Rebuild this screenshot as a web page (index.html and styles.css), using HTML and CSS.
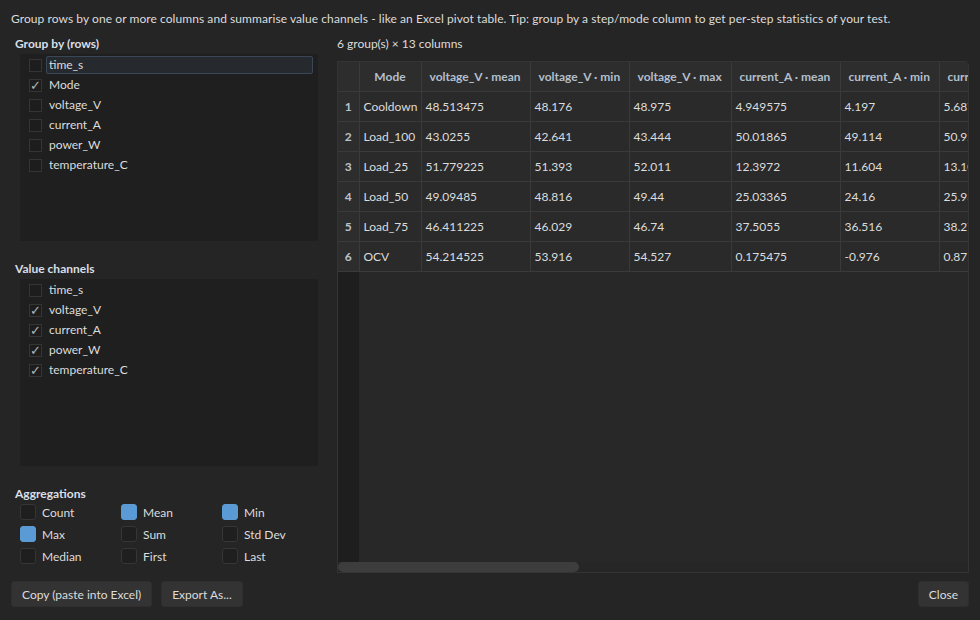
FILE: index.html
```html
<!DOCTYPE html>
<html lang="en">
<head>
  <meta charset="UTF-8">
  <title>Pivot table</title>
  <link rel="stylesheet" href="styles.css">
</head>
<body>
  <div class="dialog">
    <div class="intro">Group rows by one or more columns and summarise value channels - like an Excel pivot table. Tip: group by a step/mode column to get per-step statistics of your test.</div>

    <div class="main">
      <!-- left: options -->
      <div class="options">
        <div class="section-title">Group by (rows)</div>
        <div class="list">
          <div class="item current"><span class="check"></span><span class="label">time_s</span></div>
          <div class="item"><span class="check on">✓</span><span class="label">Mode</span></div>
          <div class="item"><span class="check"></span><span class="label">voltage_V</span></div>
          <div class="item"><span class="check"></span><span class="label">current_A</span></div>
          <div class="item"><span class="check"></span><span class="label">power_W</span></div>
          <div class="item"><span class="check"></span><span class="label">temperature_C</span></div>
        </div>

        <div class="section-title spaced">Value channels</div>
        <div class="list">
          <div class="item"><span class="check"></span><span class="label">time_s</span></div>
          <div class="item"><span class="check on">✓</span><span class="label">voltage_V</span></div>
          <div class="item"><span class="check on">✓</span><span class="label">current_A</span></div>
          <div class="item"><span class="check on">✓</span><span class="label">power_W</span></div>
          <div class="item"><span class="check on">✓</span><span class="label">temperature_C</span></div>
        </div>

        <div class="section-title spaced">Aggregations</div>
        <div class="aggs">
          <div class="agg"><span class="box"></span>Count</div>
          <div class="agg"><span class="box on"></span>Mean</div>
          <div class="agg"><span class="box on"></span>Min</div>
          <div class="agg"><span class="box on"></span>Max</div>
          <div class="agg"><span class="box"></span>Sum</div>
          <div class="agg"><span class="box"></span>Std Dev</div>
          <div class="agg"><span class="box"></span>Median</div>
          <div class="agg"><span class="box"></span>First</div>
          <div class="agg"><span class="box"></span>Last</div>
        </div>
      </div>

      <!-- right: result table -->
      <div class="result">
        <div class="caption">6 group(s) × 13 columns</div>
        <div class="frame">
          <div class="viewport">
            <table class="grid">
              <colgroup>
                <col class="c-idx"><col class="c-mode">
                <col class="c-mean"><col class="c-min"><col class="c-max">
                <col class="c-mean"><col class="c-min"><col class="c-max">
              </colgroup>
              <thead>
                <tr>
                  <th class="corner"></th>
                  <th class="center">Mode</th>
                  <th>voltage_V · mean</th><th>voltage_V · min</th><th>voltage_V · max</th>
                  <th>current_A · mean</th><th>current_A · min</th><th>current_A · max</th>
                </tr>
              </thead>
              <tbody>
                <tr><th class="row">1</th><td>Cooldown</td><td>48.513475</td><td>48.176</td><td>48.975</td><td>4.949575</td><td>4.197</td><td>5.687</td></tr>
                <tr><th class="row">2</th><td>Load_100</td><td>43.0255</td><td>42.641</td><td>43.444</td><td>50.01865</td><td>49.114</td><td>50.926</td></tr>
                <tr><th class="row">3</th><td>Load_25</td><td>51.779225</td><td>51.393</td><td>52.011</td><td>12.3972</td><td>11.604</td><td>13.105</td></tr>
                <tr><th class="row">4</th><td>Load_50</td><td>49.09485</td><td>48.816</td><td>49.44</td><td>25.03365</td><td>24.16</td><td>25.931</td></tr>
                <tr><th class="row">5</th><td>Load_75</td><td>46.411225</td><td>46.029</td><td>46.74</td><td>37.5055</td><td>36.516</td><td>38.274</td></tr>
                <tr><th class="row">6</th><td>OCV</td><td>54.214525</td><td>53.916</td><td>54.527</td><td>0.175475</td><td>-0.976</td><td>0.875</td></tr>
              </tbody>
            </table>
          </div>
          <div class="hscroll"><div class="handle"></div></div>
        </div>
      </div>
    </div>

    <div class="footer">
      <button class="btn">Copy (paste into Excel)</button>
      <button class="btn">Export As...</button>
      <span class="spacer"></span>
      <button class="btn">Close</button>
    </div>
  </div>
</body>
</html>
```

FILE: styles.css
```css
html, body {
  margin: 0;
  height: 100%;
}

body {
  background: #252525;
  color: #dcdcdc;
  font-family: Lato, "Segoe UI", "Open Sans", sans-serif;
  font-size: 12px;
  overflow: hidden;
}

.dialog {
  box-sizing: border-box;
  height: 620px;
  padding: 11px 11px 13px;
  display: flex;
  flex-direction: column;
}

.intro {
  line-height: 16px;
  white-space: nowrap;
  letter-spacing: 0.07px;
}

.main {
  flex: 1;
  display: flex;
  gap: 16px;
  margin-top: 9px;
  min-height: 0;
}

/* left column */
.options {
  width: 310px;
  flex: none;
}

.section-title {
  font-weight: bold;
  color: #d9dfe6;
  line-height: 16px;
  padding-left: 4px;
  margin-bottom: 2px;
}

.section-title.spaced {
  margin-top: 20px;
}

.list {
  margin-left: 9px;
  width: 298px;
  height: 187px;
  box-sizing: border-box;
  background: #1f1f1f;
  padding-top: 1px;
}

.item {
  height: 20px;
  display: flex;
  align-items: center;
  padding-left: 9px;
}

.check {
  width: 13px;
  height: 13px;
  box-sizing: border-box;
  border: 1px solid #353535;
  background: #1d1d1d;
  color: #b4b4b4;
  font-size: 13px;
  line-height: 11px;
  text-align: center;
  margin-right: 4px;
  font-family: "DejaVu Sans", sans-serif;
}

.label {
  flex: 1;
  padding: 0 2px;
  line-height: 16px;
  margin-right: 5px;
  border: 1px solid transparent;
}

.item.current .label {
  background: #262a2f;
  border-color: #3a4756;
  border-radius: 2px;
}

.aggs {
  display: grid;
  grid-template-columns: 101px 101px 101px;
  grid-auto-rows: 22px;
  margin-left: 9px;
  margin-top: -3px;
}

.agg {
  display: flex;
  align-items: center;
  gap: 6px;
}

.box {
  width: 16px;
  height: 16px;
  box-sizing: border-box;
  border: 1px solid #363636;
  border-radius: 3px;
  background: #1f1f1f;
}

.box.on {
  background: #5b9bd5;
  border-color: #5b9bd5;
}

/* right column */
.result {
  flex: 1;
  min-width: 0;
  display: flex;
  flex-direction: column;
}

.caption {
  line-height: 16px;
  margin-bottom: 9px;
}

.frame {
  flex: 1;
  min-height: 0;
  border: 1px solid #343434;
  border-radius: 0 4px 0 0;
  display: flex;
  flex-direction: column;
  overflow: hidden;
}

.viewport {
  flex: 1;
  overflow: hidden;
  background: linear-gradient(to right, #1e1e1e 21px, #282828 21px);
}

.grid {
  border-collapse: collapse;
  table-layout: fixed;
  width: 703px;
}

.c-idx { width: 21px; }
.c-mode { width: 62px; }
.c-mean { width: 109px; }
.c-min { width: 99px; }
.c-max { width: 102px; }

.grid th,
.grid td {
  height: 29px;
  border: 1px solid #3a3a3a;
  padding: 0 4px;
  white-space: nowrap;
  overflow: hidden;
  background: #2a2a2a;
  text-align: left;
}

.grid tr:first-child th,
.grid tr:first-child td {
  border-top: none;
}

.grid th:first-child,
.grid td:first-child {
  border-left: none;
}

.grid thead th {
  font-weight: bold;
  color: #b3bfcc;
  background: #2d2d2d;
  padding: 0 8px;
}

.grid thead th.center {
  text-align: center;
  padding: 0;
}

.grid th.row {
  text-align: center;
  padding: 0;
  font-weight: bold;
  color: #b8c2cc;
  background: #2d2d2d;
}

.hscroll {
  height: 10px;
  background: #262626;
  flex: none;
}

.handle {
  width: 241px;
  height: 10px;
  border-radius: 5px;
  background: #3d3d3d;
}

/* footer */
.footer {
  display: flex;
  gap: 9px;
  margin-top: 8px;
}

.spacer {
  flex: 1;
}

.btn {
  height: 26px;
  padding: 0 10px;
  background: #333333;
  color: #dcdcdc;
  border: 1px solid #2e2e2e;
  border-radius: 3px;
  font-family: inherit;
  font-size: 12px;
}
```
